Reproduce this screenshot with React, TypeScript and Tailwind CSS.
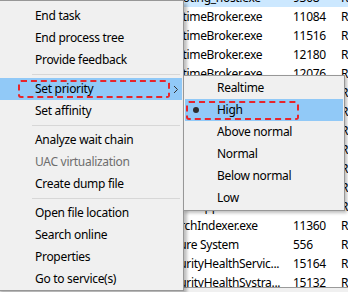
import React from "react";

const rows: { name: string; pid: string; sel?: boolean }[] = [
  { name: "remoting_host.exe", pid: "9308", sel: true },
  { name: "RuntimeBroker.exe", pid: "11084" },
  { name: "RuntimeBroker.exe", pid: "11516" },
  { name: "RuntimeBroker.exe", pid: "12180" },
  { name: "RuntimeBroker.exe", pid: "12076" },
  { name: "RuntimeBroker.exe", pid: "13460" },
  { name: "RuntimeBroker.exe", pid: "14012" },
  { name: "RuntimeBroker.exe", pid: "15572" },
  { name: "RuntimeBroker.exe", pid: "6544" },
  { name: "RuntimeBroker.exe", pid: "8648" },
  { name: "SearchApp.exe", pid: "10880" },
  { name: "SearchApp.exe", pid: "10912" },
  { name: "SearchIndexer.exe", pid: "11360" },
  { name: "Secure System", pid: "556" },
  { name: "SecurityHealthServic...", pid: "15164" },
  { name: "SecurityHealthSystra...", pid: "15132" },
];

type Item = { label: string; sep?: boolean; disabled?: boolean; active?: boolean; sub?: boolean };

const menu: Item[] = [
  { label: "End task" },
  { label: "End process tree" },
  { label: "Provide feedback" },
  { label: "", sep: true },
  { label: "Set priority", active: true, sub: true },
  { label: "Set affinity" },
  { label: "", sep: true },
  { label: "Analyze wait chain" },
  { label: "UAC virtualization", disabled: true },
  { label: "Create dump file" },
  { label: "", sep: true },
  { label: "Open file location" },
  { label: "Search online" },
  { label: "Properties" },
  { label: "Go to service(s)" },
];

const sub = ["Realtime", "High", "Above normal", "Normal", "Below normal", "Low"];

export default function App() {
  return (
    <div
      className="relative w-[348px] h-[292px] overflow-hidden bg-white text-[12px] tracking-[-0.3px] text-black"
      style={{ fontFamily: '"Noto Sans", "Open Sans", sans-serif' }}
    >
      {/* background table */}
      <div className="flex flex-col h-[287px] overflow-hidden">
        <div className="flex flex-col -mt-[12px]">
          {rows.map((r, i) => (
            <div
              key={i}
              className={`flex items-center h-[19px] shrink-0 whitespace-nowrap ${r.sel ? "bg-[#cce8ff]" : ""}`}
            >
              <div className="w-[293px] shrink-0 pl-[161px]">{r.name}</div>
              <div className="w-[48px] shrink-0">{r.pid}</div>
              <div className="shrink-0">Running</div>
            </div>
          ))}
        </div>
      </div>
      <div className="h-[1px] bg-[#9a9a9a]" />
      <div className="h-[4px] bg-[#f0f0f0]" />

      {/* main context menu */}
      <div className="absolute left-[-3px] top-0 w-[187px] h-[291px] bg-[#f0f0f0] border border-[#979797] pt-[4px] px-[1px] shadow-[3px_3px_3px_rgba(0,0,0,0.25)]">
        {menu.map((m, i) =>
          m.sep ? (
            <div key={i} className="h-[7px] pt-[3px] pl-[33px] pr-[2px]">
              <div className="h-[1px] bg-[#d7d7d7]" />
            </div>
          ) : (
            <div
              key={i}
              className={`relative flex items-center h-[22px] pl-[36px] ${m.active ? "bg-[#91c9f7]" : ""} ${
                m.disabled ? "text-[#6d6d6d]" : "text-black"
              }`}
            >
              {m.label}
              {m.sub && (
                <svg
                  className="absolute left-[174px] top-[7px]"
                  width="6"
                  height="9"
                  viewBox="0 0 6 9"
                >
                  <path d="M1 1 L4.5 4.5 L1 8" fill="none" stroke="#333" strokeWidth="1" />
                </svg>
              )}
              {m.active && (
                <div className="absolute left-[19px] top-[2px] w-[152px] h-[18px] border-2 border-dashed border-[#e8242a] rounded-[3px]" />
              )}
            </div>
          )
        )}
      </div>

      {/* priority submenu */}
      <div className="absolute left-[183px] top-[75px] w-[162px] h-[136px] bg-[#f0f0f0] border border-[#979797] p-[1px] shadow-[2px_2px_3px_rgba(0,0,0,0.25)]">
        {sub.map((s, i) => (
          <div
            key={i}
            className={`relative flex items-center h-[22px] pl-[32px] ${i === 1 ? "bg-[#91c9f7]" : ""}`}
          >
            {s}
            {i === 1 && (
              <>
                <div className="absolute left-[8px] top-[8px] w-[6px] h-[6px] rounded-full bg-[#2d2d2d]" />
                <div className="absolute left-[1px] top-[2px] w-[113px] h-[19px] border-2 border-dashed border-[#e8242a] rounded-[3px]" />
              </>
            )}
          </div>
        ))}
      </div>
    </div>
  );
}
